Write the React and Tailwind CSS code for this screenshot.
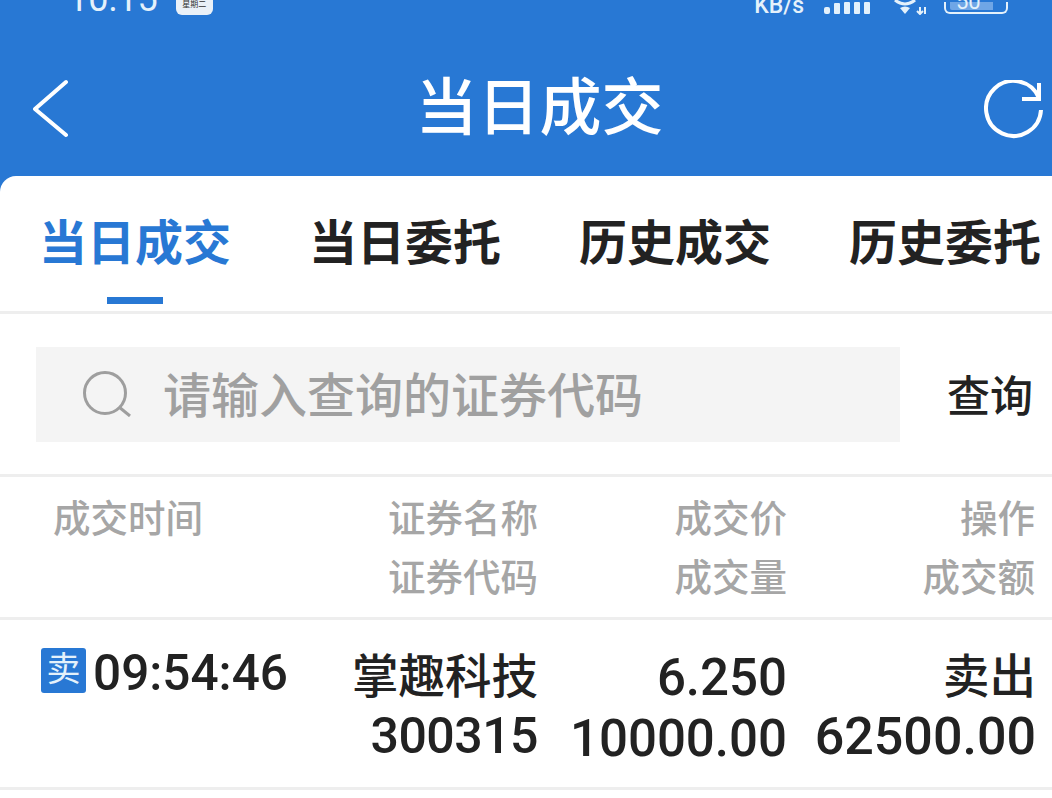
import React from "react";

const cjk = "font-['Roboto','Noto_Sans_CJK_SC',sans-serif]";

const tabs = ["当日成交", "当日委托", "历史成交", "历史委托"];

const App = () => {
  return (
    <div className={`w-[1052px] h-[798px] overflow-hidden bg-[#2878d4] ${cjk}`}>
      {/* Status bar, cut off by the top of the shot */}
      <div className="h-[14px] flex items-end justify-between pl-[68px] pr-[44px] text-[#e4f1fb]">
        <div className="flex items-end">
          <span className="text-[36px] leading-[36px] mb-[-3px]">10:15</span>
          <span className="ml-[18px] mb-[-1px] w-[37px] h-[16px] rounded-b-[6px] bg-[#eaf1f8] text-[#333] text-[8px] leading-[12px] text-center">星期二</span>
        </div>
        <div className="flex items-end">
          <span className="text-[23px] leading-[21px] font-medium mb-[-2px]">KB/s</span>
          <svg className="ml-[20px]" width="46" height="12" viewBox="0 0 46 12" fill="#e4f1fb">
            <rect x="0" y="5" width="6" height="7" rx="2" />
            <rect x="10" y="1" width="6" height="11" rx="1" />
            <rect x="20" y="0" width="6" height="12" rx="1" />
            <rect x="30" y="0" width="6" height="12" rx="1" />
            <rect x="40" y="0" width="6" height="12" rx="1" />
          </svg>
          <svg className="ml-[24px] mb-[-1px]" width="34" height="15" viewBox="0 0 34 15" fill="none" stroke="#e4f1fb" strokeWidth="3">
            <path d="M1 0 Q11 8 21 0" />
            <path d="M11 14 L6 8 Q11 5 16 8 Z" fill="#e4f1fb" stroke="none" />
            <path d="M26 7 V14 M31 14 V7 M23 11 L26 14 L29 11" strokeWidth="2" />
          </svg>
          <div className="ml-[16px] relative w-[64px] h-[12px]">
            <div className="w-full h-full border-2 border-t-0 border-[#e4f1fb] rounded-b-[6px] flex overflow-hidden">
              <div className="ml-[4px] w-[43px] h-[8px] bg-[#6fa6e6] rounded-bl-[2px]" />
            </div>
            <span className="absolute left-[12px] bottom-[1px] text-[22px] leading-[22px] text-[#e4f1fb]">50</span>
          </div>
        </div>
      </div>

      {/* Title bar */}
      <div className="h-[162px] flex items-center justify-between pt-[28px]">
        <svg className="ml-[33px]" width="36" height="60" viewBox="0 0 36 60" fill="none" stroke="#fff" strokeWidth="4" strokeLinecap="round" strokeLinejoin="round">
          <path d="M33 3 L2 30 L33 56" />
        </svg>
        <h1 className="ml-[26px] text-[62px] leading-[80px] font-medium text-white">当日成交</h1>
        <svg className="mr-[8px] mt-[1px]" width="60" height="60" viewBox="0 0 60 60" fill="none" stroke="#fff" strokeWidth="4">
          <path d="M55 18 A27.5 27.5 0 1 0 57 30" />
          <path d="M55 3 V19 H38" />
        </svg>
      </div>

      {/* White panel */}
      <div className="h-[622px] bg-white rounded-tl-[16px]">
        <div className="relative h-[138px] border-b-[3px] border-[#eeeeee] flex pl-[39px] pt-[31px]">
          {tabs.map((tab, i) => (
            <span key={tab} className={`w-[270px] shrink-0 whitespace-nowrap text-[48px] leading-[74px] font-bold ${i === 0 ? "text-[#2878d4]" : "text-[#222]"}`}>{tab}</span>
          ))}
          <span className="absolute bottom-[7px] left-[107px] w-[56px] h-[7px] bg-[#2878d4]" />
        </div>

        {/* Search */}
        <div className="h-[163px] border-b-[3px] border-[#eeeeee] flex items-center pl-[36px]">
          <div className="w-[864px] h-[95px] bg-[#f4f4f4] flex items-center pl-[47px]">
            <svg width="48" height="46" viewBox="0 0 48 46" fill="none" stroke="#9e9e9e" strokeWidth="3">
              <circle cx="22" cy="22" r="20.5" />
              <path d="M36 36 L47 45" />
            </svg>
            <span className="ml-[32px] mt-[6px] text-[48px] text-[#a0a0a0] leading-[60px] font-medium">请输入查询的证券代码</span>
          </div>
          <span className="ml-[47px] mt-[6px] text-[43px] leading-[60px] text-[#222] font-medium">查询</span>
        </div>

        {/* Table head */}
        <div className="h-[143px] border-b-[3px] border-[#eeeeee] grid grid-cols-[203px_335px_249px_248px] items-start pt-[13px] text-[37.5px] leading-[59px] font-medium text-[#a6a6a6]">
          <div className="pl-[53px] whitespace-nowrap">成交时间</div>
          <div className="text-right">证券名称<br />证券代码</div>
          <div className="text-right">成交价<br />成交量</div>
          <div className="text-right">操作<br />成交额</div>
        </div>

        {/* Row */}
        <div className="h-[170px] border-b-[3px] border-[#eeeeee] grid grid-cols-[203px_335px_249px_249px] items-start pt-[28px] text-[46.5px] leading-[59px] text-[#222] font-medium">
          <div className="flex items-start pl-[41px] whitespace-nowrap">
            <span className="shrink-0 w-[45px] h-[45px] rounded-[3px] bg-[#2878d4] text-[#e4f1fb] text-[34px] leading-[43px] text-center font-normal">卖</span>
            <span className="ml-[7px] text-[49.5px] leading-[50px]">09:54:46</span>
          </div>
          <div className="text-right">掌趣科技<br /><span className="text-[50px] tracking-[-0.5px]">300315</span></div>
          <div className="text-right"><span className="text-[51px]">6.250</span><br /><span className="text-[51px]">10000.00</span></div>
          <div className="text-right whitespace-nowrap">卖出<br /><span className="text-[52px]">62500.00</span></div>
        </div>
      </div>
    </div>
  );
};

export default App;
